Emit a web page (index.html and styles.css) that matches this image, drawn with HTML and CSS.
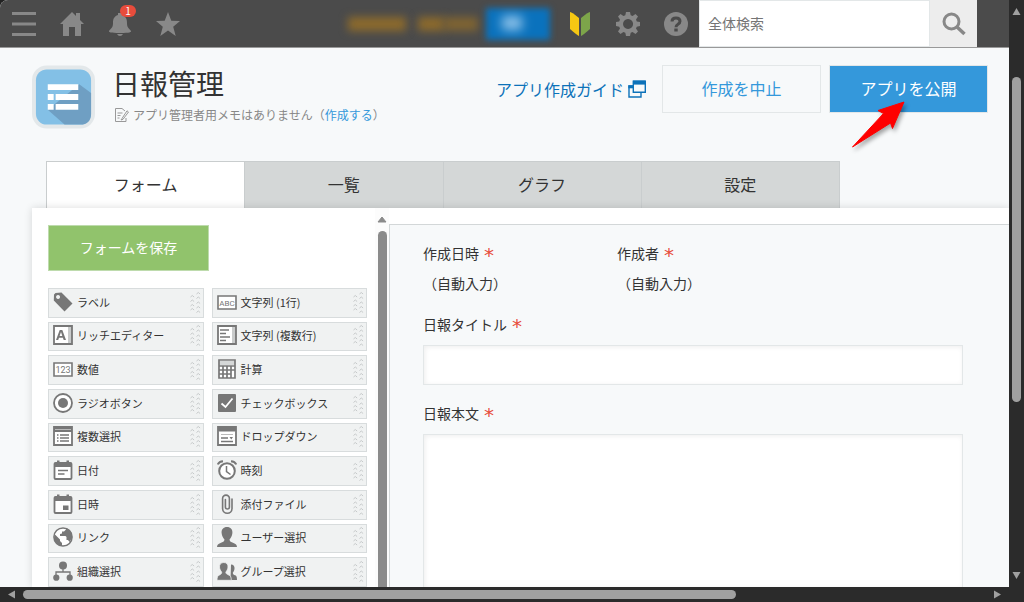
FILE: index.html
```html
<!DOCTYPE html>
<html lang="ja">
<head>
<meta charset="utf-8">
<meta name="viewport" content="width=device-width, initial-scale=1">
<title>日報管理</title>
<link rel="stylesheet" href="styles.css">
</head>
<body>
<svg class="sprite" aria-hidden="true">
  <symbol id="grip" viewBox="0 0 11 22"><path d="M.5 6q1.800-3 3.600 0M.5 10.500q1.800-3 3.600 0M.5 15q1.800-3 3.600 0M.5 19q1.800-3 3.600 0M6.500 3q1.800-3 3.600 0M6.500 7.500q1.800-3 3.600 0M6.500 12.500q1.800-3 3.600 0M6.500 17q1.800-3 3.600 0M6.500 21.500q1.800-3 3.600 0" fill="none" stroke="#c6c9ca"/></symbol>
  <symbol id="tag" viewBox="0 0 20 20"><path fill-rule="evenodd" d="M1 2.500 2.500 1 8.500.5 19.500 11.500 11.500 19.500.8 8.500ZM5 3a2 2 0 1 0 .1 0Z"/></symbol>
  <symbol id="rich" viewBox="0 0 20 20"><path fill="#fff" d="M1 1h18v18H1z"/><path fill="#c9cbcb" d="M15 1h4v18h-4z"/><path fill="none" stroke="#777" stroke-width="1.800" d="M1 1h18v18H1z"/><path fill-rule="evenodd" d="M3 15 6.700 5h2.600L13 15h-2.300l-.8-2.300H6L5.200 15ZM6.600 11h2.700L8 7Z"/></symbol>
  <symbol id="multi" viewBox="0 0 20 20"><path fill="#fff" d="M1 1h18v18H1z"/><path fill="#c9cbcb" d="M15 1h4v18h-4z"/><path fill="none" stroke="#777" stroke-width="1.800" d="M1 1h18v18H1z"/><path fill="none" stroke="#777" stroke-width="1.500" d="M3 5h9M3 8.500h6M3 12h10M3 15.500h6"/></symbol>
  <symbol id="radio" viewBox="0 0 20 20"><circle cx="10" cy="10" r="9" fill="#fff" stroke="#777" stroke-width="1.800"/><circle cx="10" cy="10" r="5"/></symbol>
  <symbol id="calc" viewBox="0 0 20 20"><path fill="#fff" d="M2 1h16v18H2z"/><path fill="#d5d7d7" d="M2 2h16v4H2z"/><path fill="none" stroke="#777" stroke-width="1.700" d="M2 1h16v18H2zM2 7h16M2 11h16M2 15h12M6 7v12M10 7v12M14 7v12"/></symbol>
  <symbol id="check" viewBox="0 0 20 20"><rect x="1" y="1" width="18" height="18" rx="1"/><path fill="none" stroke="#fff" stroke-width="1.800" d="m4.500 10.500 4 3.500 7-8.500"/></symbol>
  <symbol id="list" viewBox="0 0 20 20"><path fill="#fff" stroke="#777" stroke-width="1.800" d="M1 1h18v18H1z"/><path d="M1 1h18v5H1z"/><path fill="none" stroke="#777" stroke-width="1.500" d="M4 9h1.500M7 9h9M4 12h1.500M7 12h9M4 15h1.500M7 15h9"/><path stroke="#bbb" d="M2 3.500h16"/></symbol>
  <symbol id="drop" viewBox="0 0 20 20"><path fill="#fff" stroke="#777" stroke-width="1.800" d="M1 1h18v18H1z"/><path d="M1 1h18v4H1z"/><path stroke="#bbb" d="M2 5.500h16M4 8.500h12"/><path stroke="#777" stroke-width="1.500" d="M4 12h7M4 15.500h12"/><path d="m12.500 11 3.500 0-1.700 2.500z"/></symbol>
  <symbol id="date" viewBox="0 0 20 20"><rect x="1.500" y="3" width="17" height="16" rx="1" fill="#fff" stroke="#777" stroke-width="1.800"/><path d="M1 3h18v4H1zM4 .5h2.500V4H4zM13.500.5H16V4h-2.500z"/><path stroke="#777" stroke-width="1.500" d="M5 10.500h10M5 14h6.500"/></symbol>
  <symbol id="datetime" viewBox="0 0 20 20"><rect x="1.500" y="3" width="17" height="16" rx="1" fill="#fff" stroke="#777" stroke-width="1.800"/><path d="M1 3h18v4H1zM4 .5h2.500V4H4zM13.500.5H16V4h-2.500zM10 11.500h5.500V16H10z"/></symbol>
  <symbol id="clock" viewBox="0 0 20 20"><circle cx="10" cy="11" r="7.800" fill="#fff" stroke="#777" stroke-width="2"/><path fill="none" stroke="#777" stroke-width="2" d="M.8 4.500Q2 1.500 6 1.200M19.200 4.500Q18 1.500 14 1.200"/><path fill="none" stroke="#777" stroke-width="1.500" d="M9.500 6v5.500l4 3"/></symbol>
  <symbol id="clip" viewBox="0 0 20 20"><path fill="none" stroke="#777" stroke-width="1.600" stroke-linecap="round" d="M15 5v9.500a4.700 4.700 0 0 1-9.400 0V4.500a3.400 3.400 0 0 1 6.800 0V13a2 2 0 0 1-4 0V5.500"/></symbol>
  <symbol id="globe" viewBox="0 0 20 20"><circle cx="10" cy="10" r="9.100" fill="#fff" stroke="#777" stroke-width="1.500"/><path d="M1.500 7 7 12.500v1.500l2 2v3Q3 18 1 12ZM13 1v1.500l-2 2H9v2L7 7v2h5.500l1 1v3h1.500l1.500 2 2.500-4V7Q17 2 13 1Z"/></symbol>
  <symbol id="user" viewBox="0 0 20 20"><path d="M10 0c3.600 0 5.700 2.500 5.400 6-.3 3-1.500 5-2.900 6.500.2 2.200 1.500 2.500 4 3.500 2.300.9 3.300 1.500 3.500 4H0c.2-2.500 1.200-3.100 3.500-4 2.500-1 3.800-1.300 4-3.500C6.100 11 4.900 9 4.600 6 4.300 2.500 6.400 0 10 0Z"/></symbol>
  <symbol id="org" viewBox="0 0 20 20"><path fill="none" stroke="#777" stroke-width="1.300" d="M10 5v6M3 16v-5h14v5"/><circle cx="10" cy="4.500" r="4"/><circle cx="3.300" cy="16.700" r="3.100"/><circle cx="16.700" cy="16.700" r="3.100"/></symbol>
  <symbol id="group" viewBox="0 0 20 20"><path d="M14 3.500c2.600 0 3.800 1.800 3.500 4.200-.2 1.900-.9 3-1.700 4 .1 1.500 1 2 2.300 2.600 1.500.7 1.900 1.500 1.900 4.600h-6.500Z"/><path stroke="#f0f1f1" stroke-width=".8" d="M6.800 1.500c3 0 4.400 2 4.200 4.600-.2 2.200-1.100 3.800-2.200 5 .1 1.700 1.200 2.200 2.700 2.800 2 .8 2.700 1.800 2.800 5.400H0c0-3.600.8-4.600 2.600-5.400 1.400-.6 2-1.100 2.100-2.800-1.100-1.200-2-2.800-2.200-5-.2-2.600 1.300-4.600 4.300-4.600Z"/></symbol>
</svg>

<div class="frame">
  <div class="page">
    <header class="topbar">
      <nav class="topbar-nav" aria-label="メイン">
        <button class="icon-button" type="button" aria-label="メニュー"><svg viewBox="0 0 24 24"><path d="M0 0h24v3H0zM0 10.500h24v3H0zM0 21h24v3H0z"/></svg></button>
        <a class="icon-button" href="#" aria-label="ホーム"><svg viewBox="0 0 24 24"><path d="M12 0 16 4V1h4v7l4 4h-3v12h-6v-9H9v9H3V12H0Z"/></svg></a>
        <button class="icon-button" type="button" aria-label="通知 1件"><svg viewBox="0 0 24 24"><path d="M10 1h4v2c4 1.500 5 4 5 8 0 5 2 5 4 8 .5 1-1 2-11 2S.5 20 1 19c2-3 4-3 4-8 0-4 1-6.500 5-8ZM9 22h6q-1 2-3 2t-3-2Z"/></svg><span class="badge">1</span></button>
        <button class="icon-button" type="button" aria-label="お気に入り"><svg viewBox="0 0 24 24"><path d="m12 0 3.300 8.700 8.700.3-6.800 5.700 2.500 9.300L12 18.500 4.300 24l2.500-9.300L0 9l8.700-.3Z"/></svg></button>
      </nav>
      <div class="notice" aria-hidden="true"><span class="smudge smudge-a"></span><span class="smudge smudge-b"></span><span class="smudge smudge-c"></span><span class="chip"><span class="chip-glow"></span></span></div>
      <div class="topbar-tools">
        <button class="icon-button" type="button" aria-label="はじめに"><svg viewBox="0 0 24 24"><path fill="#f5c713" d="M2 0q2 0 9 6v18q-1 0-9-7Z"/><path fill="#7da54a" d="M22 0q-2 0-9 6v18q1 0 9-7Z"/></svg></button>
        <button class="icon-button" type="button" aria-label="設定"><svg viewBox="0 0 24 24"><path fill-rule="evenodd" d="M10 0h4l.7 3.300 1.900.8L19.500 2 22 4.500l-2 3 .8 1.900L24 10v4l-3.200.7-.8 1.900 2 2.900-2.500 2.500-2.900-2-1.900.8L14 24h-4l-.7-3.200-1.900-.8-2.900 2L2 19.500l2-2.900-.8-1.900L0 14v-4l3.200-.6.8-1.900-2-3L4.500 2l2.900 2.100 1.900-.8ZM12 7a5 5 0 1 0 .1 0Z"/></svg></button>
        <button class="icon-button" type="button" aria-label="ヘルプ"><svg viewBox="0 0 24 24"><circle cx="12" cy="12" r="12"/><path fill="none" stroke="#4a4a4a" stroke-width="3" d="M8 9.500Q8 6 12 6t4 3.300Q16 11 14 12.200t-2 3"/><path fill="#4a4a4a" d="M10.300 16.500h3.400v3h-3.400z"/></svg></button>
      </div>
      <form class="search" role="search">
        <input class="search-input" type="text" placeholder="全体検索" aria-label="全体検索">
        <button class="search-button" type="button" aria-label="検索"><svg viewBox="0 0 24 24"><circle cx="9.500" cy="9.500" r="7.500" fill="none" stroke="#888" stroke-width="3"/><path stroke="#888" stroke-width="3.500" d="m14.500 14.500 8 7.500"/></svg></button>
      </form>
    </header>

    <section class="app-head">
      <svg class="app-icon" viewBox="0 0 64 64" aria-hidden="true"><rect width="64" height="64" rx="15" fill="#e3e8ea"/><rect x="4" y="4" width="56" height="56" rx="11" fill="#83c0e6"/><path fill="#6f9fc3" d="m48 19 12 9v21q0 11-11 11H33L16 45Z"/><path fill="#83c0e6" d="M16 25h6v10h-6z"/><path fill="#fff" d="M16 19h31v6H16zM16 29h6v6h-6zM24 29h23v6H24zM16 39h6v6h-6zM24 39h23v6H24z"/></svg>
      <div class="app-info">
        <h1 class="app-title">日報管理</h1>
        <p class="memo"><svg class="memo-icon" viewBox="0 0 14 14" aria-hidden="true"><path fill="none" stroke="#999" d="M11 10v3.500H.5V.5H7L10 3M2.500 5h5M2.500 7.500h3M2.500 10h2M7 10.500l-1 1.500 2-.7L13.500 4 12 2.800Z"/></svg>アプリ管理者用メモはありません（<a href="#">作成する</a>）</p>
      </div>
      <div class="actions">
        <a class="guide" href="#">アプリ作成ガイド<svg class="guide-icon" viewBox="0 0 18 18" aria-hidden="true"><path fill="#f7f9fa" stroke="#0c72b9" stroke-width="1.400" d="M1 6h12v11H1z"/><path fill="#0c72b9" d="M.3 5.300H5v3H.3z"/><path fill="#f7f9fa" stroke="#0c72b9" stroke-width="1.400" d="M5.300 1.300h12v11h-12z"/><path fill="#0c72b9" d="M5 .6h12.500v4H5z"/></svg></a>
        <button class="button button-plain" type="button">作成を中止</button>
        <div class="publish">
          <button class="button button-primary" type="button">アプリを公開</button>
          <svg class="pointer" viewBox="0 0 64 58" aria-hidden="true"><path fill="#fe0000" stroke="#fe0000" stroke-linejoin="round" d="m57 6-26 8.500 5.500 3L5.500 51 43.500 27l2 5.500Z"/></svg>
        </div>
      </div>
    </section>

    <div class="tabs" role="tablist">
      <button class="tab tab-active" type="button" role="tab" aria-selected="true">フォーム</button>
      <button class="tab" type="button" role="tab" aria-selected="false">一覧</button>
      <button class="tab" type="button" role="tab" aria-selected="false">グラフ</button>
      <button class="tab" type="button" role="tab" aria-selected="false">設定</button>
    </div>

    <main class="editor">
      <aside class="palette">
        <button class="save" type="button">フォームを保存</button>
        <div class="parts">
          <button class="part" type="button"><svg class="part-icon"><use href="#tag"/></svg>ラベル<svg class="grip"><use href="#grip"/></svg></button>
          <button class="part" type="button"><svg class="part-icon" viewBox="0 0 20 20" aria-hidden="true"><path fill="#fff" stroke="#777" stroke-width="1.600" d="M1 4h18v13H1z"/><text x="10" y="13.500" text-anchor="middle" font-size="8">ABC</text></svg>文字列 (1行)<svg class="grip"><use href="#grip"/></svg></button>
          <button class="part" type="button"><svg class="part-icon"><use href="#rich"/></svg>リッチエディター<svg class="grip"><use href="#grip"/></svg></button>
          <button class="part" type="button"><svg class="part-icon"><use href="#multi"/></svg>文字列 (複数行)<svg class="grip"><use href="#grip"/></svg></button>
          <button class="part" type="button"><svg class="part-icon" viewBox="0 0 20 20" aria-hidden="true"><path fill="#fff" stroke="#777" stroke-width="1.600" d="M1 4h18v13H1z"/><text x="10" y="14" text-anchor="middle" font-size="9">123</text></svg>数値<svg class="grip"><use href="#grip"/></svg></button>
          <button class="part" type="button"><svg class="part-icon"><use href="#calc"/></svg>計算<svg class="grip"><use href="#grip"/></svg></button>
          <button class="part" type="button"><svg class="part-icon"><use href="#radio"/></svg>ラジオボタン<svg class="grip"><use href="#grip"/></svg></button>
          <button class="part" type="button"><svg class="part-icon"><use href="#check"/></svg>チェックボックス<svg class="grip"><use href="#grip"/></svg></button>
          <button class="part" type="button"><svg class="part-icon"><use href="#list"/></svg>複数選択<svg class="grip"><use href="#grip"/></svg></button>
          <button class="part" type="button"><svg class="part-icon"><use href="#drop"/></svg>ドロップダウン<svg class="grip"><use href="#grip"/></svg></button>
          <button class="part" type="button"><svg class="part-icon"><use href="#date"/></svg>日付<svg class="grip"><use href="#grip"/></svg></button>
          <button class="part" type="button"><svg class="part-icon"><use href="#clock"/></svg>時刻<svg class="grip"><use href="#grip"/></svg></button>
          <button class="part" type="button"><svg class="part-icon"><use href="#datetime"/></svg>日時<svg class="grip"><use href="#grip"/></svg></button>
          <button class="part" type="button"><svg class="part-icon"><use href="#clip"/></svg>添付ファイル<svg class="grip"><use href="#grip"/></svg></button>
          <button class="part" type="button"><svg class="part-icon"><use href="#globe"/></svg>リンク<svg class="grip"><use href="#grip"/></svg></button>
          <button class="part" type="button"><svg class="part-icon"><use href="#user"/></svg>ユーザー選択<svg class="grip"><use href="#grip"/></svg></button>
          <button class="part" type="button"><svg class="part-icon"><use href="#org"/></svg>組織選択<svg class="grip"><use href="#grip"/></svg></button>
          <button class="part" type="button"><svg class="part-icon"><use href="#group"/></svg>グループ選択<svg class="grip"><use href="#grip"/></svg></button>
        </div>
      </aside>
      <div class="palette-scroll" aria-hidden="true"><svg class="palette-arrow" viewBox="0 0 10 7"><path d="M5 1 9 6H1Z" stroke="#8b8b8b" stroke-linejoin="round"/></svg><div class="palette-thumb"></div></div>
      <section class="canvas">
        <div class="auto-fields">
          <div><div class="label">作成日時<span class="required">*</span></div><div class="auto-value">（自動入力）</div></div>
          <div><div class="label">作成者<span class="required">*</span></div><div class="auto-value">（自動入力）</div></div>
        </div>
        <label class="label" for="report-title">日報タイトル<span class="required">*</span></label>
        <input class="field" id="report-title" type="text">
        <label class="label" for="report-body">日報本文<span class="required">*</span></label>
        <textarea class="field field-body" id="report-body"></textarea>
      </section>
    </main>
  </div>

  <div class="bar bar-vertical" aria-hidden="true">
    <svg class="bar-arrow" viewBox="0 0 9 9"><path d="M4.500 1 8.500 8h-8Z"/></svg>
    <div class="track"><div class="thumb" style="top:10%;height:60%"></div></div>
    <svg class="bar-arrow" viewBox="0 0 9 9"><path d="M.5 1h8l-4 7Z"/></svg>
  </div>
  <div class="bar bar-horizontal" aria-hidden="true">
    <svg class="bar-arrow" viewBox="0 0 9 9"><path d="M1 4.500 8 .5v8Z"/></svg>
    <div class="track"><div class="thumb" style="left:0;width:74%"></div></div>
    <svg class="bar-arrow" viewBox="0 0 9 9"><path d="M8 4.500 1 .5v8Z"/></svg>
  </div>
</div>
</body>
</html>
```
FILE: styles.css
```css
* { box-sizing: border-box; }

body {
  margin: 0;
  background: #222;
  color: #333;
  font-family: "Noto Sans CJK JP", "Liberation Sans", sans-serif;
  font-size: 14px;
  line-height: 20px;
}

button, input, textarea { font: inherit; color: inherit; }
button { margin: 0; padding: 0; border: 0; background: none; cursor: pointer; }
a { color: #3498db; text-decoration: none; }
svg { display: block; flex: none; }
.sprite { position: absolute; width: 0; height: 0; }

.frame {
  display: grid;
  grid-template-columns: minmax(0, 1fr) 15px;
  grid-template-rows: minmax(0, 1fr) 15px;
  height: 100vh;
  overflow: hidden;
}

.page {
  display: flex;
  flex-direction: column;
  overflow: hidden;
  border-top-left-radius: 8px;
  background: #f7f9fa;
}

/* Top bar */
.topbar {
  display: flex;
  flex: none;
  align-items: center;
  height: 48px;
  padding: 0 32px 0 12px;
  border-bottom: 1px solid #999;
  background: #4b4b4b;
}
.topbar-nav, .topbar-tools { display: flex; gap: 24px; }
.icon-button { position: relative; display: block; width: 24px; height: 24px; }
.icon-button svg { width: 24px; height: 24px; fill: #888; }
.badge {
  position: absolute;
  top: -7px;
  right: -4px;
  width: 16px;
  height: 12px;
  border-radius: 6px;
  background: #e74c3c;
  color: #fff;
  font-size: 10px;
  line-height: 12px;
  text-align: center;
}
.notice { display: flex; align-items: center; margin-left: auto; margin-right: 18px; }
.smudge { height: 14px; background: #8c6a2c; filter: blur(4px); }
.smudge-a { width: 58px; }
.smudge-b { width: 26px; margin-left: 12px; }
.smudge-c { width: 34px; opacity: 0.8; }
.chip {
  width: 64px;
  height: 32px;
  margin-left: 8px;
  padding: 8px 16px;
  background: #0a72bd;
  filter: blur(3px);
}
.chip-glow { display: block; width: 20px; height: 14px; background: #8fc3ea; filter: blur(4px); }
.search { display: flex; align-self: stretch; width: 278px; margin-left: 11px; }
.search-input {
  flex: 1;
  min-width: 0;
  padding: 0 8px 2px;
  border: 1px solid #e3e7e8;
  border-radius: 0;
  background: #fff;
}
.search-input::placeholder { color: #757575; opacity: 1; }
.search-button { display: grid; place-items: center; width: 47px; background: #ededed; }
.search-button svg { width: 24px; height: 24px; }

/* App heading */
.app-head { display: flex; flex: none; padding: 17px 21px 0 32px; }
.app-icon { width: 63px; height: 64px; }
.app-info { padding-left: 17px; }
.app-title { margin: 0; font-size: 28px; font-weight: 400; line-height: 36px; }
.memo { display: flex; align-items: center; margin: 4px 0 0; color: #888; font-size: 12px; line-height: 20px; }
.memo-icon { width: 14px; height: 14px; margin-right: 4px; margin-left: 3px; }
.actions { display: flex; align-items: flex-start; margin-left: auto; font-size: 16px; }
.guide { display: flex; align-items: center; gap: 4px; height: 48px; margin-right: 16px; color: #0c72b9; }
.guide-icon { width: 18px; height: 18px; }
.button { width: 159px; height: 48px; padding-bottom: 3px; border: 1px solid #e3e7e8; }
.button-plain { margin-right: 8px; color: #3498db; }
.button-primary { background: #3498db; color: #fff; }
.publish { position: relative; }
.pointer {
  position: absolute;
  top: 31px;
  left: 18px;
  width: 64px;
  height: 58px;
  filter: drop-shadow(2px 3px 2px rgba(0, 0, 0, 0.35));
  pointer-events: none;
}

/* Tabs */
.tabs { display: flex; flex: none; width: 794px; max-width: 100%; margin: 32px 0 0 46px; }
.tab {
  flex: 1;
  height: 47px;
  padding-bottom: 3px;
  border: 1px solid #c9cdce;
  border-width: 1px 1px 0 0;
  background: #d4d7d7;
  color: #333;
  font-size: 16px;
}
.tab-active { border-left-width: 1px; background: #fff; }

/* Form editor */
.editor {
  display: flex;
  flex: 1;
  min-height: 0;
  margin-left: 32px;
  background: #fff;
  box-shadow: 0 0 8px rgba(0, 0, 0, 0.14);
}
.palette { display: flex; flex: none; flex-direction: column; width: 343px; padding: 17px 8px 0 16px; }
.save {
  flex: none;
  width: 161px;
  height: 46px;
  padding-bottom: 2px;
  border: 1px solid #bedbad;
  background: #91c36c;
  color: #fff;
}
.parts {
  display: grid;
  flex: 1;
  grid-template-columns: 1fr 1fr;
  grid-auto-rows: 1fr;
  gap: 4px 8px;
  min-height: 0;
  margin-top: 17px;
}
.part {
  display: flex;
  align-items: center;
  min-height: 0;
  padding: 0 2px 2px 4px;
  border: 1px solid #d8dcdd;
  background: #f0f2f2;
  font-size: 11px;
  line-height: 16px;
  white-space: nowrap;
}
.part-icon { width: 20px; height: 20px; margin-right: 4px; fill: #777; font-family: Roboto, sans-serif; }
.grip { width: 11px; height: 22px; margin-left: auto; }
.palette-scroll {
  display: flex;
  flex: none;
  flex-direction: column;
  align-items: center;
  width: 14px;
  padding-top: 8px;
  background: #fcfcfc;
}
.palette-arrow { width: 10px; height: 7px; fill: #8b8b8b; }
.palette-thumb { flex: 1; width: 9px; margin-top: 8px; border-radius: 5px 5px 0 0; background: #8b8b8b; }
.canvas {
  display: flex;
  flex: 1;
  flex-direction: column;
  min-width: 0;
  margin-top: 16px;
  padding: 18px 46px 0 33px;
  border: 1px solid #d3d7d8;
  border-width: 1px 0 0 1px;
  background: #f7f9fa;
}
.auto-fields { display: grid; grid-template-columns: 194px 1fr; margin-bottom: 21px; }
.label { display: block; flex: none; height: 20px; line-height: 20px; }
.required {
  margin-left: 5px;
  color: #e74c3c;
  font-family: "DejaVu Sans", sans-serif;
  font-size: 20px;
  line-height: 16px;
  vertical-align: -3px;
}
.auto-value { margin-top: 10px; line-height: 20px; }
.field {
  flex: none;
  width: 100%;
  height: 40px;
  margin: 11px 0 18px;
  padding: 0 8px;
  border: 1px solid #e3e7e8;
  border-radius: 0;
  background: #fff;
  box-shadow: inset 1px 1px 5px #eee;
}
.field-body { flex: 1; min-height: 0; margin-bottom: 0; border-bottom: 0; resize: none; }

/* Window scroll bars */
.bar { display: flex; align-items: center; background: #2b2b2b; }
.bar-vertical { flex-direction: column; padding: 7px 0; }
.bar-horizontal { grid-column: 1 / -1; padding: 0 22px 0 7px; }
.bar-arrow { width: 9px; height: 9px; fill: #a0a0a0; }
.track { position: relative; flex: 1; }
.bar-vertical .track { width: 9px; margin: 7px 0; }
.bar-horizontal .track { height: 9px; margin: 0 7px; }
.thumb { position: absolute; width: 9px; height: 9px; border-radius: 5px; background: #a0a0a0; }
```
